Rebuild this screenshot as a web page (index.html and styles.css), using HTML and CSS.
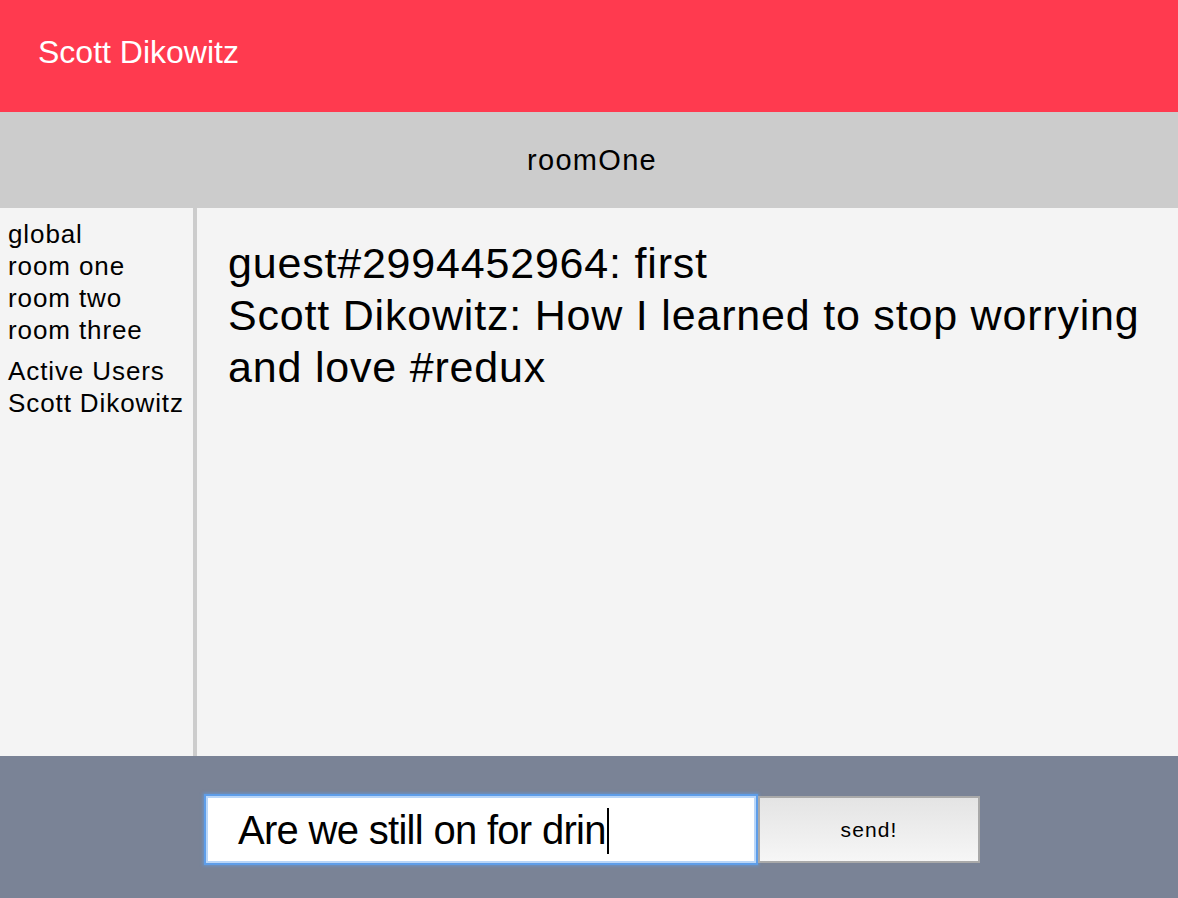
FILE: index.html
```html
<!DOCTYPE html>
<html lang="en">
<head>
<meta charset="utf-8">
<title>Chat</title>
<link rel="stylesheet" href="styles.css">
</head>
<body>
<div class="app">
  <header class="topbar">Scott Dikowitz</header>
  <div class="roombar">roomOne</div>
  <div class="body">
    <aside class="sidebar">
      <ul class="rooms">
        <li>global</li>
        <li>room one</li>
        <li>room two</li>
        <li>room three</li>
      </ul>
      <ul class="users">
        <li>Active Users</li>
        <li>Scott Dikowitz</li>
      </ul>
    </aside>
    <main class="messages">
      <div class="msg">guest#2994452964: first</div>
      <div class="msg">Scott Dikowitz: How I learned to stop worrying and love #redux</div>
    </main>
  </div>
  <footer class="composer">
    <div class="field"><span class="typed">Are we still on for drin</span><span class="caret"></span></div>
    <button class="send" type="button">send!</button>
  </footer>
</div>
</body>
</html>
```

FILE: styles.css
```css
html, body {
  margin: 0;
  padding: 0;
  height: 100%;
}
body {
  font-family: "Liberation Sans", Arial, Helvetica, sans-serif;
  color: #000;
  background: #f4f4f4;
}
.app {
  display: flex;
  flex-direction: column;
  height: 898px;
}
.topbar {
  box-sizing: border-box;
  height: 112px;
  flex: 0 0 112px;
  background: #ff3a4f;
  color: #fff;
  font-size: 32px;
  line-height: 36px;
  padding: 34px 38px 0;
}
.roombar {
  flex: 0 0 96px;
  height: 96px;
  background: #cccccc;
  display: flex;
  align-items: center;
  justify-content: center;
  font-size: 29px;
  letter-spacing: 1.3px;
  padding-left: 6px;
}
.body {
  flex: 1 1 auto;
  display: flex;
  min-height: 0;
  background: #f4f4f4;
}
.sidebar {
  box-sizing: border-box;
  width: 197px;
  flex: 0 0 197px;
  border-right: 4px solid #cccccc;
  padding: 10px 0 0 8px;
}
.sidebar ul {
  list-style: none;
  margin: 0;
  padding: 0;
  font-size: 26px;
  letter-spacing: 0.9px;
  line-height: 32px;
  white-space: nowrap;
}
.sidebar .users {
  margin-top: 9px;
}
.messages {
  flex: 1 1 auto;
  padding: 29px 31px 0 31px;
  font-size: 43px;
  letter-spacing: 0.8px;
  line-height: 52px;
}
.composer {
  flex: 0 0 142px;
  height: 142px;
  box-sizing: border-box;
  background: #7a8396;
  display: flex;
  justify-content: center;
  align-items: flex-start;
  gap: 2px;
  padding: 40px 0 0 8px;
}
.field {
  box-sizing: border-box;
  width: 550px;
  height: 67px;
  background: #fff;
  border: 2px solid #b9d6f8;
  box-shadow: 0 0 0 2px #5e9de8, 0 0 3px 3px rgba(94, 157, 232, 0.6);
  padding: 10px 0 0 30px;
  font-size: 40px;
  line-height: 45px;
  letter-spacing: -0.7px;
  white-space: nowrap;
  overflow: hidden;
}
.caret {
  display: inline-block;
  width: 2px;
  height: 46px;
  background: #000;
  vertical-align: -10px;
  margin-left: 1px;
}
.send {
  box-sizing: border-box;
  width: 222px;
  height: 67px;
  border: 2px solid #a9a9a9;
  background: linear-gradient(to bottom, #e4e4e4, #f6f6f6);
  font-family: "Liberation Sans", Arial, Helvetica, sans-serif;
  font-size: 21px;
  letter-spacing: 1.1px;
  color: #000;
  padding: 0;
  margin: 0;
}
```
